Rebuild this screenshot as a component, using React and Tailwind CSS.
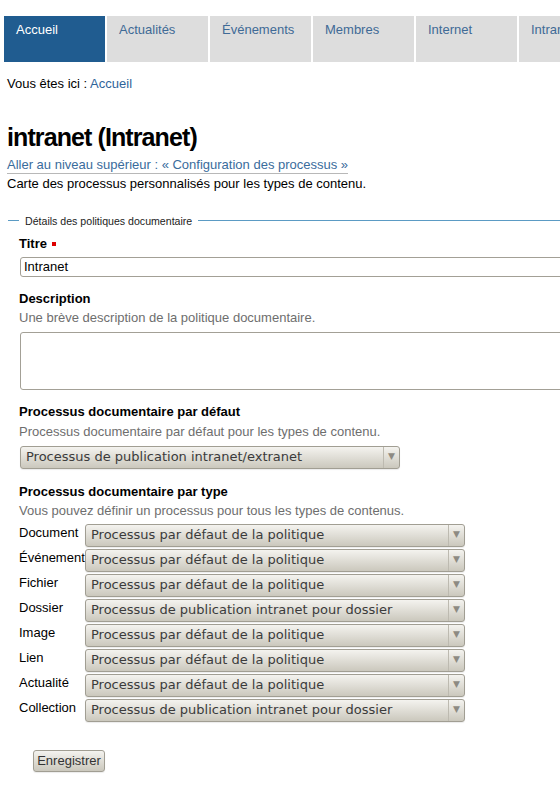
import React from "react";

const tabs = ["Accueil", "Actualités", "Événements", "Membres", "Internet", "Intranet"];

const rows = [
  ["Document", "Processus par défaut de la politique"],
  ["Événement", "Processus par défaut de la politique"],
  ["Fichier", "Processus par défaut de la politique"],
  ["Dossier", "Processus de publication intranet pour dossier"],
  ["Image", "Processus par défaut de la politique"],
  ["Lien", "Processus par défaut de la politique"],
  ["Actualité", "Processus par défaut de la politique"],
  ["Collection", "Processus de publication intranet pour dossier"],
];

function Select({ value, className = "" }) {
  return (
    <div
      className={
        "flex h-[23px] w-[380px] shrink-0 items-stretch rounded-[3px] border border-[#a19e93] bg-gradient-to-b from-[#f4f3ef] to-[#cbc8bd] shadow-[0_1px_1px_rgba(0,0,0,0.08)] " +
        className
      }
    >
      <div
        className="flex flex-1 items-center overflow-hidden whitespace-nowrap pl-[5px] text-[13px] text-[#3b3b3b]"
        style={{ fontFamily: '"DejaVu Sans", sans-serif' }}
      >
        {value}
      </div>
      <div className="flex w-[16px] items-center justify-center border-l border-[#bdbab0] text-[9px] text-[#8d8a82]" style={{ fontFamily: '"DejaVu Sans", sans-serif' }}>
        ▼
      </div>
    </div>
  );
}

export default function App() {
  return (
    <div
      className="min-h-[799px] w-[560px] overflow-hidden bg-white text-[13px] text-black"
      style={{ fontFamily: '"Liberation Sans", Arial, sans-serif' }}
    >
      {/* nav */}
      <div className="ml-[4px] mt-[16px] flex h-[46px] gap-[2px] whitespace-nowrap">
        {tabs.map((t, i) => (
          <div
            key={t}
            className={
              "w-[101px] shrink-0 pl-[12px] pt-[6px] text-[13px] leading-[16px] " +
              (i === 0 ? "bg-[#205c90] text-white" : "bg-[#dddddd] text-[#3f6a96]")
            }
          >
            {t}
          </div>
        ))}
      </div>

      <div className="pl-[7px]">
        <div className="mt-[14px] leading-[16px]">
          Vous êtes ici : <span className="text-[#2f649a]">Accueil</span>
        </div>

        <h1 className="mt-[30px] text-[25px] font-bold leading-[30px] tracking-[-0.9px] text-black">
          intranet (Intranet)
        </h1>

        <div className="mt-[3px]">
          <span className="inline-block border-b border-[#b8b8b8] leading-[16px] text-[#3a6c9c]">
            Aller au niveau supérieur : « Configuration des processus »
          </span>
        </div>
        <div className="mt-[1px] leading-[16px]">
          Carte des processus personnalisés pour les types de contenu.
        </div>
      </div>

      {/* fieldset legend */}
      <div className="mt-[21px] flex h-[16px] items-center pl-[8px]">
        <div className="h-px w-[11px] bg-[#5b9bc4]" />
        <div className="px-[6px] text-[10.6px] leading-[16px] text-[#222]">
          Détails des politiques documentaire
        </div>
        <div className="h-px flex-1 bg-[#5b9bc4]" />
      </div>

      <div className="pl-[19px]">
        <div className="mt-[7px] flex items-center text-[13px] font-bold leading-[16px]">
          Titre
          <span className="ml-[5px] inline-block h-[4px] w-[4px] bg-[#dd0000]" />
        </div>
        <div className="mt-[5px] ml-[1px] flex h-[20px] w-[560px] items-center rounded-[3px] border border-[#a3a096] pl-[3px] leading-[16px]">
          Intranet
        </div>

        <div className="mt-[14px] font-bold leading-[16px]">Description</div>
        <div className="mt-[3px] leading-[16px] text-[#6e6e6e]">
          Une brève description de la politique documentaire.
        </div>
        <div className="mt-[6px] ml-[1px] h-[58px] w-[560px] rounded-[3px] border border-[#a3a096]" />

        <div className="mt-[14px] font-bold leading-[16px]">Processus documentaire par défaut</div>
        <div className="mt-[4px] leading-[16px] text-[#6e6e6e]">
          Processus documentaire par défaut pour les types de contenu.
        </div>
        <Select value="Processus de publication intranet/extranet" className="mt-[6px] ml-[1px]" />

        <div className="mt-[15px] font-bold leading-[16px]">Processus documentaire par type</div>
        <div className="mt-[3px] leading-[16px] text-[#6e6e6e]">
          Vous pouvez définir un processus pour tous les types de contenus.
        </div>

        <div className="mt-[5px] flex flex-col gap-[2px]">
          {rows.map(([label, value]) => (
            <div key={label} className="flex items-start">
              <div className="w-[66px] shrink-0 whitespace-nowrap pt-[1px] leading-[16px]">{label}</div>
              <Select value={value} />
            </div>
          ))}
        </div>

        <div className="ml-[14px] mt-[28px] flex h-[22px] w-[72px] items-center justify-center rounded-[3px] border border-[#a19e93] bg-gradient-to-b from-[#f4f3ef] to-[#cbc8bd] text-[13px] text-[#333] shadow-[0_1px_1px_rgba(0,0,0,0.08)]">
          Enregistrer
        </div>
      </div>
    </div>
  );
}
